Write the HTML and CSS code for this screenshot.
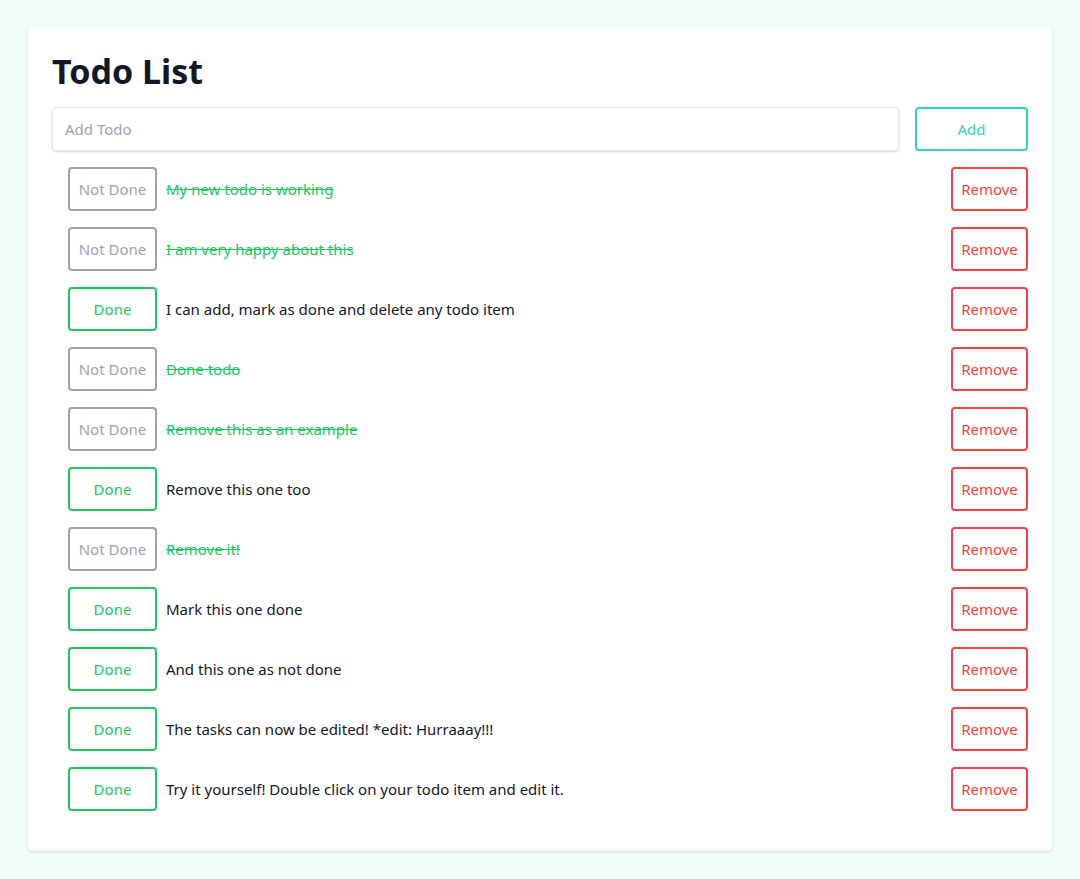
FILE: index.html
```html
<!DOCTYPE html>
<html lang="en">
<head>
<meta charset="utf-8">
<title>Todo List</title>
<link rel="stylesheet" href="styles.css">
</head>
<body>
<main class="card">
  <h1 class="title">Todo List</h1>
  <form class="add-form">
    <input class="add-input" type="text" placeholder="Add Todo">
    <button class="btn btn-add" type="button">Add</button>
  </form>
  <ul class="list">
    <li class="item"><button class="btn btn-toggle not-done">Not Done</button><span class="text done-text">My new todo is working</span><button class="btn btn-remove">Remove</button></li>
    <li class="item"><button class="btn btn-toggle not-done">Not Done</button><span class="text done-text">I am very happy about this</span><button class="btn btn-remove">Remove</button></li>
    <li class="item"><button class="btn btn-toggle done">Done</button><span class="text">I can add, mark as done and delete any todo item</span><button class="btn btn-remove">Remove</button></li>
    <li class="item"><button class="btn btn-toggle not-done">Not Done</button><span class="text done-text">Done todo</span><button class="btn btn-remove">Remove</button></li>
    <li class="item"><button class="btn btn-toggle not-done">Not Done</button><span class="text done-text">Remove this as an example</span><button class="btn btn-remove">Remove</button></li>
    <li class="item"><button class="btn btn-toggle done">Done</button><span class="text">Remove this one too</span><button class="btn btn-remove">Remove</button></li>
    <li class="item"><button class="btn btn-toggle not-done">Not Done</button><span class="text done-text">Remove it!</span><button class="btn btn-remove">Remove</button></li>
    <li class="item"><button class="btn btn-toggle done">Done</button><span class="text">Mark this one done</span><button class="btn btn-remove">Remove</button></li>
    <li class="item"><button class="btn btn-toggle done">Done</button><span class="text">And this one as not done</span><button class="btn btn-remove">Remove</button></li>
    <li class="item"><button class="btn btn-toggle done">Done</button><span class="text">The tasks can now be edited! *edit: Hurraaay!!!</span><button class="btn btn-remove">Remove</button></li>
    <li class="item"><button class="btn btn-toggle done">Done</button><span class="text">Try it yourself! Double click on your todo item and edit it.</span><button class="btn btn-remove">Remove</button></li>
  </ul>
</main>
</body>
</html>
```
FILE: styles.css
```css
* { box-sizing: border-box; }
html, body { margin: 0; padding: 0; }
body {
  background: #f0fdfa;
  font-family: "Noto Sans", "Open Sans", sans-serif;
  font-size: 15px;
  color: #111827;
  padding: 27px 28px 28px 28px;
}
.card {
  background: #ffffff;
  border-radius: 4px;
  box-shadow: 0 1px 3px rgba(0,0,0,0.10), 0 1px 2px rgba(0,0,0,0.06);
  padding: 24px 24px 40px 24px;
}
.title {
  margin: 0 0 16px 0;
  font-size: 34px;
  line-height: 40px;
  font-weight: 700;
  color: #111827;
}
.add-form {
  display: flex;
  gap: 16px;
  margin: 0 0 16px 0;
}
.add-input {
  flex: 1;
  height: 44px;
  border: 1px solid #e5e7eb;
  border-radius: 4px;
  box-shadow: 0 1px 3px rgba(0,0,0,0.10), 0 1px 2px rgba(0,0,0,0.06);
  padding: 0 12px;
  font: inherit;
  color: #111827;
  outline: none;
}
.add-input::placeholder { color: #9ca3af; }
.btn {
  font: inherit;
  background: #fff;
  border: 2px solid;
  border-radius: 4px;
  height: 44px;
  padding: 0;
  white-space: nowrap;
  cursor: pointer;
}
.btn-add {
  width: 113px;
  flex: none;
  color: #2dd4bf;
  border-color: #2dd4bf;
}
.list {
  list-style: none;
  margin: 0;
  padding: 0 0 0 16px;
  display: flex;
  flex-direction: column;
  gap: 16px;
}
.item {
  display: flex;
  align-items: center;
  gap: 9px;
}
.btn-toggle { width: 89px; flex: none; }
.not-done { color: #9ca3af; border-color: #9ca3af; }
.done { color: #22c55e; border-color: #22c55e; }
.text { flex: 1; color: #111827; }
.done-text { color: #22c55e; text-decoration: line-through; }
.btn-remove { width: 77px; flex: none; color: #ef4444; border-color: #ef4444; }
```
